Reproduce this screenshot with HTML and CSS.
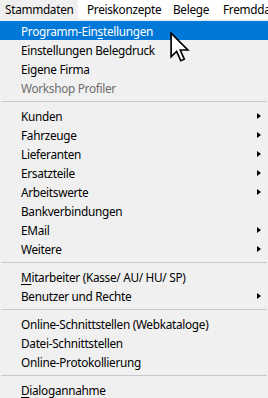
FILE: index.html
```html
<!doctype html>
<html>
    <head>
        <title>Stammdaten</title>
        <link rel="stylesheet" href="styles.css">
    </head>
    <body>
        <div class="menubar">
            <span class="top open">Stammdaten</span>
            <span class="top w-preis">Preiskonzepte</span>
            <span class="top w-belege">Belege</span>
            <span class="top">Fremddaten</span>
        </div>

        <ul class="menu">
            <li class="item selected"><span>Programm-Ein<u>s</u>tellungen</span></li>
            <li class="item"><span>Einstellungen Belegdruck</span></li>
            <li class="item"><span>Eigene Firma</span></li>
            <li class="item disabled"><span>Workshop Profiler</span></li>
            <li class="sep"></li>
            <li class="item sub"><span>Kunden</span></li>
            <li class="item sub"><span>Fahrzeuge</span></li>
            <li class="item sub"><span>Lieferanten</span></li>
            <li class="item sub"><span>Ersatzteile</span></li>
            <li class="item sub"><span>Arbeitswerte</span></li>
            <li class="item"><span>Bankverbindungen</span></li>
            <li class="item sub"><span>EMail</span></li>
            <li class="item sub"><span>Weitere</span></li>
            <li class="sep"></li>
            <li class="item"><span><u>M</u>itarbeiter (Kasse/ AU/ HU/ SP)</span></li>
            <li class="item sub"><span>Benutzer und Rechte</span></li>
            <li class="sep"></li>
            <li class="item"><span>Online-Schnittstellen (Webkataloge)</span></li>
            <li class="item"><span>Datei-Schnittstellen</span></li>
            <li class="item"><span>Online-Protokollierung</span></li>
            <li class="sep"></li>
            <li class="item"><span><u>D</u>ialogannahme</span></li>
        </ul>

        <svg class="cursor" width="22" height="31" viewBox="0 0 20 28">
            <path d="M1 1 L1 22.5 L6 17.5 L9.8 26 L13 24.6 L9.3 16.3 L16.2 16.3 Z" fill="white" stroke="black" stroke-width="1.5" stroke-linejoin="miter"/>
        </svg>
    </body>
</html>
```

FILE: styles.css
```css
:root {
    --menu-bg: #f0f0f0;
    --bar-bg: #ffffff;
    --select-bg: #0078d7;
    --disabled-fg: #6d6d6d;
    --sep-color: #c8c8c8;
    --row-height: 19px;
}

body {
    margin: 0;
    width: 268px;
    height: 398px;
    overflow: hidden;
    position: relative;
    font-family: 'Noto Sans', 'DejaVu Sans', sans-serif;
    font-size: 11.8px;
    letter-spacing: -0.3px;
    color: #000;
    background: var(--menu-bg);
}

.menubar {
    display: flex;
    height: 19px;
    background: var(--bar-bg);
    white-space: nowrap;
    overflow: hidden;
}

.top {
    display: flex;
    align-items: center;
    flex: none;
    box-sizing: border-box;
    padding-bottom: 1px;
}

.top.open {
    width: 78px;
    padding-left: 5px;
    background: var(--menu-bg);
}

.top.w-preis {
    width: 95px;
    padding-left: 9px;
}

.top.w-belege {
    width: 50px;
}

.menu {
    list-style: none;
    margin: 0;
    padding: 2px 0 0 0;
    background: var(--menu-bg);
}

.item {
    display: flex;
    align-items: center;
    justify-content: space-between;
    height: var(--row-height);
    padding: 0 7px 0 21px;
    white-space: nowrap;
}

.item u {
    text-underline-offset: 2px;
}

.item.selected {
    background: var(--select-bg);
    color: white;
}

.item.disabled {
    color: var(--disabled-fg);
}

.item.sub::after {
    content: "";
    border-left: 4px solid black;
    border-top: 3.5px solid transparent;
    border-bottom: 3.5px solid transparent;
}

.sep {
    height: 9px;
    display: flex;
    align-items: center;
    padding: 0 1px;
}

.sep::before {
    content: "";
    flex: 1;
    height: 1px;
    background: var(--sep-color);
}

.cursor {
    position: absolute;
    left: 170px;
    top: 32px;
}
```
